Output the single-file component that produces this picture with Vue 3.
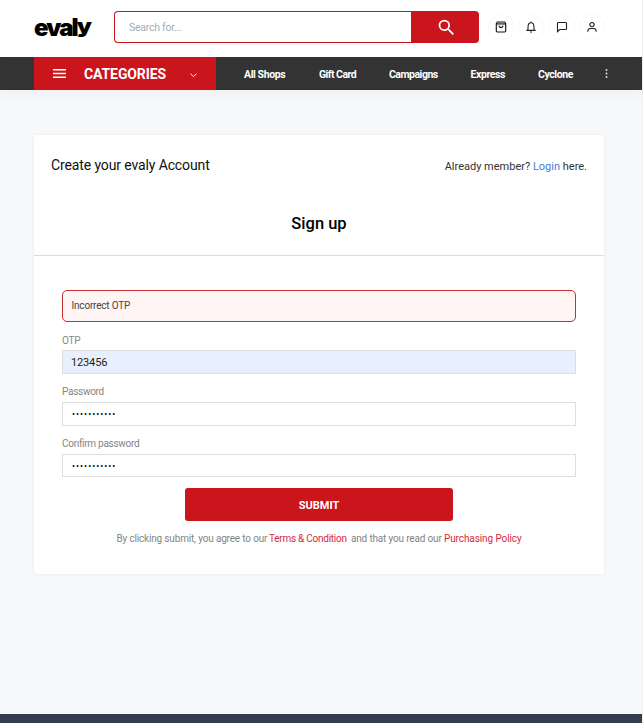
<script setup>
import { ref } from 'vue'

const links = [
  { label: 'All Shops', cls: 'shops' },
  { label: 'Gift Card', cls: 'gift' },
  { label: 'Campaigns', cls: 'campaigns' },
  { label: 'Express', cls: 'express' },
  { label: 'Cyclone', cls: 'cyclone' },
]
const otp = ref('123456')
const password = ref('abcdefghijk')
const confirm = ref('abcdefghijk')
</script>

<template>
  <div class="page">
    <header class="top">
      <div class="logo">eval<span class="tail">y</span></div>
      <div class="search">
        <input class="search-input" type="text" placeholder="Search for..." />
        <button class="search-btn" aria-label="Search">
          <svg width="21" height="21" viewBox="0 0 24 24" fill="#fff"><path d="M15.5 14h-.79l-.28-.27A6.47 6.47 0 0 0 16 9.5 6.5 6.5 0 1 0 9.5 16c1.61 0 3.09-.59 4.23-1.57l.27.28v.79l5 4.99L20.49 19l-4.99-5zm-6 0a4.5 4.5 0 1 1 0-9 4.5 4.5 0 0 1 0 9z" /></svg>
        </button>
      </div>
      <div class="actions">
        <span class="round"><svg width="12" height="12" viewBox="0 0 12 12" fill="none" stroke="#111" stroke-width="1.1"><path d="M2.3 1h7.4l1 1.6v7.5a.9.9 0 0 1-.9.9H2.2a.9.9 0 0 1-.9-.9V2.6zM1.3 2.9h9.4M3.9 4.7c.4 2.5 3.8 2.5 4.2 0" /><path d="M2 2h8" stroke="#777" /></svg></span>
        <span class="round"><svg width="12" height="12" viewBox="0 0 12 12" fill="none" stroke="#222" stroke-width="1.1"><path d="M1.3 9.4h9.4M2.6 9.2c.5-.8.5-1.8.5-3.7C3.1 3 4.1 1.8 6 1.8S8.9 3 8.9 5.5c0 1.900 0 2.900.5 3.700M6 .5v1.200M5 11h2" /></svg></span>
        <span class="round"><svg width="12" height="12" viewBox="0 0 12 12" fill="none" stroke="#222" stroke-width="1.1"><path d="M1.5 10.6V2.3a.8.8 0 0 1 .8-.8h7.4a.8.8 0 0 1 .8.8v5.400a.8.8 0 0 1-.8.8H3.6z" /></svg></span>
        <span class="round"><svg width="12" height="12" viewBox="0 0 12 12" fill="none" stroke="#222" stroke-width="1.1"><circle cx="6" cy="3.6" r="2.1" /><path d="M1.9 10.7V10c0-1.600 1-2.500 2.600-2.500h3c1.600 0 2.600.9 2.600 2.500v.7" /></svg></span>
      </div>
    </header>

    <nav class="nav">
      <div class="categories">
        <svg class="burger" width="13" height="9" viewBox="0 0 13 9" fill="#fff"><path d="M0 0h13v1.4H0zM0 3.8h13v1.4H0zM0 7.6h13V9H0z" /></svg>
        <span class="cat-label">CATEGORIES</span>
        <svg class="chev" width="7" height="5" viewBox="0 0 7 5" fill="none" stroke="#fff" stroke-width="1"><path d="M.6.8l2.9 2.8L6.4.8" /></svg>
      </div>
      <a v-for="l in links" :key="l.label" class="link" :class="l.cls"><span>{{ l.label }}</span></a>
      <svg class="more" width="3" height="9" viewBox="0 0 3 9" fill="#ddd"><circle cx="1.5" cy="1.1" r="1" /><circle cx="1.5" cy="4.5" r="1" /><circle cx="1.5" cy="7.9" r="1" /></svg>
    </nav>

    <main class="card">
      <div class="card-head">
        <div class="head-row">
          <h1>Create your evaly Account</h1>
          <p class="member">Already member? <a>Login</a> here.</p>
        </div>
        <h2>Sign up</h2>
      </div>
      <form class="form" @submit.prevent>
        <div class="alert">Incorrect OTP</div>
        <label class="l-otp">OTP</label>
        <input v-model="otp" class="field otp" type="text" />
        <label class="l-pass">Password</label>
        <input v-model="password" class="field secret" type="password" />
        <label class="l-confirm">Confirm password</label>
        <input v-model="confirm" class="field secret last" type="password" />
        <button class="submit">SUBMIT</button>
        <p class="terms"><span class="t1">By clicking submit, you agree to our</span><a class="t2">Terms &amp; Condition</a><span class="t3">and that you read our</span><a class="t4">Purchasing Policy</a></p>
      </form>
    </main>
    <footer class="footer"></footer>
  </div>
</template>

<style>
body { background: #f7f8fa; overflow: hidden; }
</style>

<style scoped>
* { box-sizing: border-box; }
.page {
  display: flex;
  flex-direction: column;
  height: 723px;
  border-right: 1px solid #efefef;
  font-family: Roboto, "Liberation Sans", sans-serif;
  background: #f7f8fa;
  white-space: nowrap;
}
h1, h2, p { margin: 0; font-weight: 400; }
input, button { font-family: inherit; outline: none; }
.top { display: flex; height: 57px; padding: 11px 37px 0 34px; background: #fff; flex: none; }
.logo {
  width: 80px; height: 32px; line-height: 34px;
  font-family: Inter, sans-serif; font-weight: 900; font-size: 24px; letter-spacing: -1.9px;
  color: #000;
}
.tail { display: inline-block; transform: scaleY(0.8); transform-origin: 50% 11px; }
.search { display: flex; width: 365px; height: 32px; }
.search-input {
  width: 297px; border: 1px solid #c9151b; border-right: 0; border-radius: 4px 0 0 4px;
  padding: 0 0 0 14px; font-size: 10.5px; letter-spacing: -0.25px; background: #fff;
}
.search-input::placeholder { color: #a0aec0; opacity: 1; }
.search-btn {
  display: flex; align-items: center; justify-content: center;
  width: 68px; border: 0; padding: 0 0 0 2px; background: #c9151b; border-radius: 0 4px 4px 0;
}
.actions { display: flex; gap: 6.3px; margin: 4px 0 0 10px; }
.round {
  display: flex; align-items: center; justify-content: center;
  width: 24px; height: 24px; border-radius: 50%; background: #fff;
  box-shadow: 0 0 3px rgba(0, 0, 0, 0.06);
}
.nav {
  display: flex; align-items: center; flex: none; height: 33px; padding-left: 34px;
  background: #333; color: #fff; box-shadow: 0 4px 12px rgba(0, 0, 0, 0.04);
}
.categories { display: flex; align-items: center; width: 182px; height: 33px; padding-left: 19px; background: #c9151b; }
.cat-label { width: 106px; margin-left: 18px; font-size: 14px; font-weight: 700; letter-spacing: -0.1px; line-height: 33px; padding-top: 1px; }
.chev { margin-top: 3px; }
.burger { flex: none; }
.link { font-size: 10.5px; font-weight: 700; letter-spacing: -0.4px; line-height: 33px; padding-top: 1px; }
.shops { width: 75px; margin-left: 28px; }
.gift { width: 70px; letter-spacing: -0.55px; }
.campaigns { width: 81.5px; letter-spacing: -0.5px; }
.express { width: 67.5px; }
.cyclone { width: 67px; }
.card {
  flex: none; width: 570px; height: 439px; margin: 45px 0 0 34px;
  background: #fff; border-radius: 3px; box-shadow: 0 0 4px rgba(0, 0, 0, 0.06);
}
.card-head { height: 121px; border-bottom: 1px solid #dcdcdc; }
.head-row { display: flex; justify-content: space-between; padding: 20px 17px 0; height: 73px; }
h1 { font-size: 14px; line-height: 20px; letter-spacing: -0.12px; color: #111; }
.member { font-size: 11px; line-height: 23px; color: #333; }
.member a { color: #4a7bd0; }
h2 { text-align: center; font-size: 16.5px; font-weight: 500; line-height: 32px; color: #000; }
.form { display: flex; flex-direction: column; padding: 34px 28px 0; }
.alert {
  height: 32px; line-height: 30px; padding-left: 8.5px; border: 1px solid #c53030; border-radius: 5px;
  background: #fff5f5; font-size: 10px; letter-spacing: -0.2px; color: #444;
}
label { height: 17px; line-height: 17px; font-size: 10px; letter-spacing: -0.28px; color: #858585; }
.l-otp { margin-top: 10px; height: 18px; }
.l-pass, .l-confirm { margin-top: 9px; height: 19px; line-height: 18px; }
.field { height: 24px; border: 1px solid #dedede; padding: 0 8px; background: #fff; font-size: 11px; letter-spacing: -0.15px; color: #222; }
.otp { background: #e8f0fe; }
.secret { padding-left: 9px; font-size: 9px; color: #000; letter-spacing: 1px; }
.last { height: 23px; }
.submit {
  align-self: center; width: 268px; height: 33px; margin-top: 11px; padding: 1px 0 0; border: 0; border-radius: 3px;
  background: #c9151b; color: #fff; font-size: 11px; font-weight: 700;
}
.terms { display: flex; margin: 8px 0 0 54.5px; height: 20px; line-height: 20px; font-size: 10px; letter-spacing: -0.17px; color: #858585; }
.terms a { color: #d8283d; }
.t1 { width: 152.5px; }
.t2 { width: 82px; }
.t3 { width: 93px; }
.terms .t2 { letter-spacing: -0.25px; }
.terms .t4 { letter-spacing: -0.1px; }
.footer { height: 9px; margin-top: auto; background: #323e4e; }
</style>
